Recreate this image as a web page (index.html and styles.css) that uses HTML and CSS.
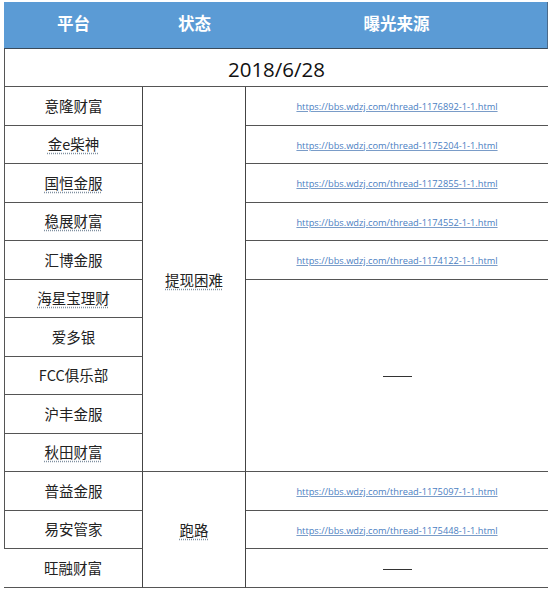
FILE: index.html
```html
<!DOCTYPE html>
<html lang="zh-CN">
<head>
<meta charset="utf-8">
<title>平台曝光</title>
<link rel="stylesheet" href="styles.css">
</head>
<body>
<div class="sheet">
  <div class="hd">平台</div>
  <div class="hd">状态</div>
  <div class="hd hd-last">曝光来源</div>

  <div class="date">2018/6/28</div>

  <div class="name r3"><span>意隆财富</span></div>
  <div class="status s1"><span class="sq">提现困难</span></div>
  <div class="src r3"><a href="#">https://bbs.wdzj.com/thread-1176892-1-1.html</a></div>

  <div class="name r4"><span class="sq">金e柴神</span></div>
  <div class="src r4"><a href="#">https://bbs.wdzj.com/thread-1175204-1-1.html</a></div>

  <div class="name r5"><span class="sq">国恒金服</span></div>
  <div class="src r5"><a href="#">https://bbs.wdzj.com/thread-1172855-1-1.html</a></div>

  <div class="name r6"><span class="sq">稳展财富</span></div>
  <div class="src r6"><a href="#">https://bbs.wdzj.com/thread-1174552-1-1.html</a></div>

  <div class="name r7"><span>汇博金服</span></div>
  <div class="src r7"><a href="#">https://bbs.wdzj.com/thread-1174122-1-1.html</a></div>

  <div class="name r8"><span class="sq">海星宝理财</span></div>
  <div class="src dash-a"><span class="dash"></span></div>

  <div class="name r9"><span>爱多银</span></div>
  <div class="name r10"><span>FCC俱乐部</span></div>
  <div class="name r11"><span>沪丰金服</span></div>
  <div class="name r12"><span class="sq">秋田财富</span></div>

  <div class="name r13"><span>普益金服</span></div>
  <div class="status s2"><span class="sq">跑路</span></div>
  <div class="src r13"><a href="#">https://bbs.wdzj.com/thread-1175097-1-1.html</a></div>

  <div class="name r14"><span>易安管家</span></div>
  <div class="src r14"><a href="#">https://bbs.wdzj.com/thread-1175448-1-1.html</a></div>

  <div class="name r15 no-left"><span>旺融财富</span></div>
  <div class="src r15"><span class="dash"></span></div>
</div>
</body>
</html>
```

FILE: styles.css
```css
* { box-sizing: border-box; }

html, body {
  margin: 0;
  padding: 0;
  background: #ffffff;
}

body {
  padding: 2px 0 0 4px;
  font-family: "Noto Sans CJK SC", "Open Sans", sans-serif;
  color: #222222;
}

.sheet {
  display: grid;
  width: 544px;
  grid-template-columns: 139px 103px 302px;
  grid-template-rows: 47px 38px repeat(13, 38.5px);
}

.sheet > div {
  display: flex;
  align-items: center;
  justify-content: center;
  border-bottom: 1px solid #555555;
}

.hd {
  grid-row: 1;
  background: #5b9bd5;
  color: #ffffff;
  font-weight: 700;
  font-size: 16.5px;
  padding-bottom: 4px;
  border-bottom: 1px solid #3a4a5a !important;
}

.hd-last { border-right: 1px solid #4a6a8a; }

.date {
  grid-row: 2;
  grid-column: 1 / 4;
  border-left: 1px solid #555555;
  font-family: "Open Sans", "Noto Sans", sans-serif;
  font-size: 20.5px;
  color: #111111;
  padding-top: 2px;
}

.name {
  grid-column: 1;
  border-left: 1px solid #555555;
  border-right: 1px solid #444444;
  font-size: 14.5px;
  line-height: 1;
}

.name.no-left { border-left: none; }

.status {
  grid-column: 2;
  border-right: 1px solid #444444;
  font-size: 14.5px;
}

.s1 { grid-row: 3 / 13; }
.s2 { grid-row: 13 / 16; }

.src {
  grid-column: 3;
}

.src a {
  font-family: "Open Sans", sans-serif;
  font-size: 9.25px;
  color: #4a7ec2;
  text-decoration: underline;
  text-decoration-color: #7a9cc8;
  padding-top: 2px;
}

.dash {
  display: block;
  width: 29px;
  height: 1px;
  margin-top: 3px;
  background: #333333;
}

.dash-a { grid-row: 8 / 13; }

.sq {
  text-decoration: underline dotted #8090a0;
  text-underline-offset: 3px;
}

.r3 { grid-row: 3; }
.r4 { grid-row: 4; }
.r5 { grid-row: 5; }
.r6 { grid-row: 6; }
.r7 { grid-row: 7; }
.r8 { grid-row: 8; }
.r9 { grid-row: 9; }
.r10 { grid-row: 10; }
.r11 { grid-row: 11; }
.r12 { grid-row: 12; }
.r13 { grid-row: 13; }
.r14 { grid-row: 14; }
.r15 { grid-row: 15; }
```
